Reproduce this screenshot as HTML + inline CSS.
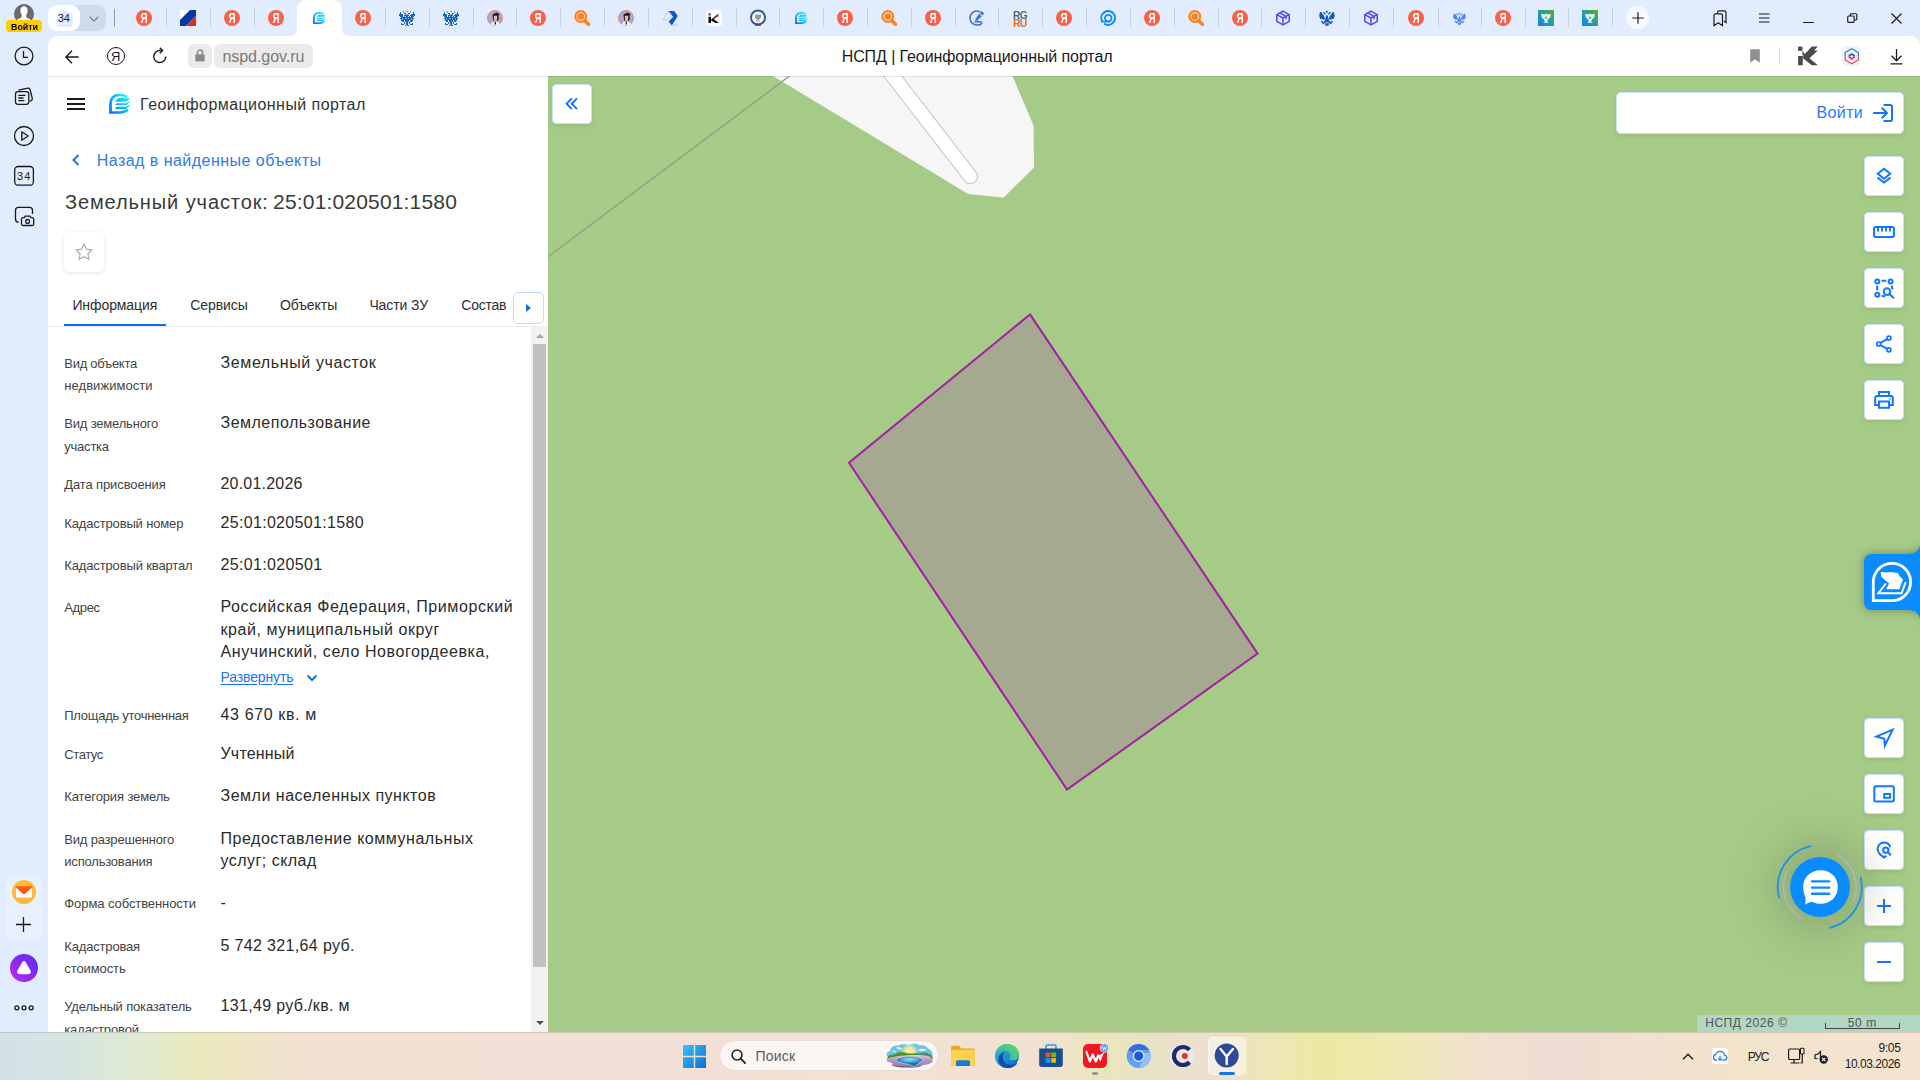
<!DOCTYPE html>
<html lang="ru">
<head>
<meta charset="utf-8">
<title>НСПД | Геоинформационный портал</title>
<style>
*{box-sizing:border-box;margin:0;padding:0}
html,body{width:1920px;height:1080px;overflow:hidden;background:#e1edff;font-family:"Liberation Sans",sans-serif;color:#333}
.a{position:absolute}
.t{position:absolute;white-space:pre;line-height:1}
svg{position:absolute;overflow:visible}
#chrome{left:0;top:0;width:1920px;height:76px;background:#e1edff}
#side{left:0;top:0;width:48px;height:1032px;background:#e1edff}
#addr{left:48px;top:36px;width:1872px;height:40px;background:#fff;border-radius:9px 9px 0 0}
#addrline{left:48px;top:76px;width:1872px;height:1px;background:rgba(0,0,0,.1)}
#panel{left:48px;top:76px;width:500px;height:956px;background:#fff;overflow:hidden}
#map{left:548px;top:76px;width:1372px;height:956px;background:#a6cb87;overflow:hidden}
#task{left:0;top:1032px;width:1920px;height:48px;background:linear-gradient(90deg,#d3e1e7 0px,#d6e4e2 70px,#deead4 130px,#ebe9bc 200px,#efe4c8 255px,#f2e0d4 330px,#f2dfd6 680px,#f2e2d3 900px,#f0e1d2 1040px,#ece6bd 1095px,#e8e2c6 1150px,#ecdfd0 1205px,#ede7b4 1275px,#ebeaa2 1330px,#eee8b4 1400px,#f1e0d0 1490px,#f1ddd4 1560px,#f2e3cb 1740px,#f6e3d2 1920px)}
.sep{position:absolute;top:8px;width:1px;height:19px;background:#c3cfdf}
.mb{position:absolute;width:40px;height:40px;background:#fff;border:1px solid #c6dfff;border-radius:4.500px;box-shadow:0 2px 5px rgba(0,0,0,.09)}
.lb{color:#444;font-size:13px}
.vl{color:#2b2b2b;font-size:16px}
</style>
</head>
<body>
<div id="chrome" class="a"></div>
<div id="side" class="a"></div>
<div id="addr" class="a"></div>
<svg width="70" height="36" viewBox="285 0 70 36" style="left:285px;top:0"><path d="M289,36C294.5,36 297,33.5 297,28V9C297,3.5 300.5,0 306,0H333C338.500,0 342,3.500 342,9V28C342,33.5 344.500,36 350,36Z" fill="#fff"/></svg>
<svg width="24" height="24" viewBox="12 2 24 24" style="left:12px;top:2px"><circle cx="24" cy="14" r="10" fill="#6b6b6b"/><path d="M24,6.200C26.200,6.200 27.600,7.900 27.600,10.400C27.600,12.200 27,13.900 26.200,15C26.100,16.200 26.300,17.200 27.300,17.900C29.300,18.700 31,19.400 32,21H16C17,19.400 18.700,18.700 20.700,17.900C21.700,17.200 21.900,16.200 21.800,15C21,13.900 20.400,12.200 20.400,10.400C20.400,7.900 21.800,6.200 24,6.200Z" fill="#fff"/></svg>
<div class="a" style="left:6px;top:20px;width:36px;height:12px;background:#ffcc00;border-radius:4px"></div>
<div class="t" style="left:11.2px;top:22px;font-size:9.5px;color:#000;font-weight:700;transform-origin:0 0;transform:scaleX(.93);">Войти</div>
<div class="a" style="left:48px;top:5px;width:58px;height:26px;background:#cfdbed;border-radius:9px"></div>
<div class="a" style="left:48px;top:5px;width:32px;height:26px;background:#fff;border-radius:9px"></div>
<svg width="18" height="19" viewBox="55 8.500 18 19" style="left:55px;top:8.500px"><path d="M64.400,9.300L70.800,12.400C72,13 72.700,14 72.700,15.300V23C72.700,25.200 71.200,26.700 69,26.700H59.800C57.600,26.700 56.100,25.200 56.100,23V15.300C56.100,14 56.800,13 58,12.400Z" fill="#e1edff"/></svg>
<div class="t" style="left:57.8px;top:13px;font-size:11px;letter-spacing:-0.1px;color:#222;">34</div>
<svg width="10" height="6" viewBox="0 0 10 6" style="left:89.200px;top:15.800px"><path d="M0.700,0.700L5,5L9.300,0.700" fill="none" stroke="#7b8696" stroke-width="1.300"/></svg>
<div class="a" style="left:114px;top:9px;width:1px;height:18px;background:#8e9aac"></div>
<div class="sep" style="left:166px"></div><div class="sep" style="left:210px"></div><div class="sep" style="left:254px"></div><div class="sep" style="left:385px"></div><div class="sep" style="left:429px"></div><div class="sep" style="left:473px"></div><div class="sep" style="left:516px"></div><div class="sep" style="left:560px"></div><div class="sep" style="left:604px"></div><div class="sep" style="left:648px"></div><div class="sep" style="left:692px"></div><div class="sep" style="left:736px"></div><div class="sep" style="left:779px"></div><div class="sep" style="left:823px"></div><div class="sep" style="left:867px"></div><div class="sep" style="left:911px"></div><div class="sep" style="left:955px"></div><div class="sep" style="left:998px"></div><div class="sep" style="left:1042px"></div><div class="sep" style="left:1086px"></div><div class="sep" style="left:1130px"></div><div class="sep" style="left:1174px"></div><div class="sep" style="left:1218px"></div><div class="sep" style="left:1261px"></div><div class="sep" style="left:1305px"></div><div class="sep" style="left:1349px"></div><div class="sep" style="left:1393px"></div><div class="sep" style="left:1438px"></div><div class="sep" style="left:1481px"></div><div class="sep" style="left:1525px"></div><div class="sep" style="left:1568px"></div><div class="sep" style="left:1612px"></div>
<div class="a" style="left:136.0px;top:10px;width:16px;height:16px;border-radius:8px;background:#fc5f45"></div><div class="t" style="left:136.0px;top:11px;width:16px;text-align:center;font-size:14px;font-weight:700;color:#fff;transform:scaleX(.7)">Я</div>
<svg width="16" height="16" viewBox="0 0 16 16" style="left:179.8px;top:10px"><rect width="16" height="16" fill="#fff"/><path d="M10,0H16V5.800L5.800,16H0V10Z" fill="#0636a8"/><path d="M16,5.800V16H5.800Z" fill="#dc2b1d"/></svg>
<div class="a" style="left:223.6px;top:10px;width:16px;height:16px;border-radius:8px;background:#fc5f45"></div><div class="t" style="left:223.6px;top:11px;width:16px;text-align:center;font-size:14px;font-weight:700;color:#fff;transform:scaleX(.7)">Я</div>
<div class="a" style="left:267.5px;top:10px;width:16px;height:16px;border-radius:8px;background:#fc5f45"></div><div class="t" style="left:267.5px;top:11px;width:16px;text-align:center;font-size:14px;font-weight:700;color:#fff;transform:scaleX(.7)">Я</div>
<svg width="13" height="12" viewBox="109 93.500 22 20.500" style="left:313.3px;top:12.0px"><defs><linearGradient id="ng1" gradientUnits="userSpaceOnUse" x1="110" y1="113" x2="130" y2="96"><stop offset="0" stop-color="#0a6cff"/><stop offset=".55" stop-color="#05c0ff"/><stop offset="1" stop-color="#45ffd0"/></linearGradient></defs><path d="M126,96.400C123.500,94.800 121,95 118.600,95C113.600,95 110.500,99 110.500,104V112.500H120.500C123,112.500 124.600,111.600 127,110.400" fill="none" stroke="url(#ng1)" stroke-width="3" stroke-linecap="round"/><path d="M118.300,98H130.200L126.700,101.800H115ZM116.700,103.200H126.200L129.500,101L129.900,102L126.600,105.100H115ZM116.500,106.800H126.200L129.500,104.600L129.900,105.600L126.300,108.900H115Z" fill="url(#ng1)"/></svg>
<div class="a" style="left:355.1px;top:10px;width:16px;height:16px;border-radius:8px;background:#fc5f45"></div><div class="t" style="left:355.1px;top:11px;width:16px;text-align:center;font-size:14px;font-weight:700;color:#fff;transform:scaleX(.7)">Я</div>
<svg width="16" height="15" viewBox="0 0 16 15" style="left:398.9px;top:11px;filter:blur(.35px)"><g fill="#1767bd"><rect x="4" y="0" width="1" height="1" opacity=".55"/><rect x="7" y="0" width="2" height="1" opacity=".55"/><rect x="11" y="0" width="1" height="1" opacity=".55"/><rect x="1" y="1" width="1" height="1"/><rect x="4" y="1" width="1" height="1" opacity=".55"/><rect x="11" y="1" width="1" height="1" opacity=".55"/><rect x="14" y="1" width="1" height="1"/><rect x="1" y="2" width="1" height="1"/><rect x="5" y="2" width="2" height="1"/><rect x="9" y="2" width="2" height="1"/><rect x="14" y="2" width="1" height="1"/><rect x="0" y="3" width="4" height="1"/><rect x="6" y="3" width="4" height="1" opacity=".55"/><rect x="12" y="3" width="4" height="1"/><rect x="0" y="4" width="4" height="1"/><rect x="5" y="4" width="5" height="1"/><rect x="11" y="4" width="5" height="1"/><rect x="1" y="5" width="3" height="1"/><rect x="5" y="5" width="1" height="1"/><rect x="7" y="5" width="2" height="1"/><rect x="10" y="5" width="1" height="1"/><rect x="12" y="5" width="3" height="1"/><rect x="2" y="6" width="12" height="1"/><rect x="1" y="7" width="2" height="1"/><rect x="3" y="7" width="1" height="1" opacity=".55"/><rect x="4" y="7" width="2" height="1"/><rect x="6" y="7" width="2" height="1" opacity=".55"/><rect x="8" y="7" width="1" height="1"/><rect x="9" y="7" width="1" height="1" opacity=".55"/><rect x="10" y="7" width="2" height="1"/><rect x="12" y="7" width="1" height="1" opacity=".55"/><rect x="13" y="7" width="2" height="1"/><rect x="2" y="8" width="1" height="1"/><rect x="3" y="8" width="1" height="1" opacity=".55"/><rect x="4" y="8" width="8" height="1"/><rect x="12" y="8" width="1" height="1" opacity=".55"/><rect x="13" y="8" width="1" height="1"/><rect x="2" y="9" width="3" height="1"/><rect x="6" y="9" width="4" height="1"/><rect x="11" y="9" width="3" height="1"/><rect x="3" y="10" width="2" height="1"/><rect x="6" y="10" width="4" height="1"/><rect x="11" y="10" width="2" height="1"/><rect x="5" y="11" width="1" height="1"/><rect x="7" y="11" width="2" height="1"/><rect x="10" y="11" width="1" height="1"/><rect x="2" y="12" width="1" height="1"/><rect x="5" y="12" width="1" height="1"/><rect x="7" y="12" width="2" height="1"/><rect x="10" y="12" width="1" height="1"/><rect x="13" y="12" width="1" height="1"/><rect x="2" y="13" width="3" height="1"/><rect x="7" y="13" width="2" height="1"/><rect x="11" y="13" width="3" height="1"/><rect x="6" y="14" width="1" height="1"/><rect x="8" y="14" width="2" height="1"/></g></svg>
<svg width="16" height="15" viewBox="0 0 16 15" style="left:442.7px;top:11px;filter:blur(.35px)"><g fill="#1767bd"><rect x="4" y="0" width="1" height="1" opacity=".55"/><rect x="7" y="0" width="2" height="1" opacity=".55"/><rect x="11" y="0" width="1" height="1" opacity=".55"/><rect x="1" y="1" width="1" height="1"/><rect x="4" y="1" width="1" height="1" opacity=".55"/><rect x="11" y="1" width="1" height="1" opacity=".55"/><rect x="14" y="1" width="1" height="1"/><rect x="1" y="2" width="1" height="1"/><rect x="5" y="2" width="2" height="1"/><rect x="9" y="2" width="2" height="1"/><rect x="14" y="2" width="1" height="1"/><rect x="0" y="3" width="4" height="1"/><rect x="6" y="3" width="4" height="1" opacity=".55"/><rect x="12" y="3" width="4" height="1"/><rect x="0" y="4" width="4" height="1"/><rect x="5" y="4" width="5" height="1"/><rect x="11" y="4" width="5" height="1"/><rect x="1" y="5" width="3" height="1"/><rect x="5" y="5" width="1" height="1"/><rect x="7" y="5" width="2" height="1"/><rect x="10" y="5" width="1" height="1"/><rect x="12" y="5" width="3" height="1"/><rect x="2" y="6" width="12" height="1"/><rect x="1" y="7" width="2" height="1"/><rect x="3" y="7" width="1" height="1" opacity=".55"/><rect x="4" y="7" width="2" height="1"/><rect x="6" y="7" width="2" height="1" opacity=".55"/><rect x="8" y="7" width="1" height="1"/><rect x="9" y="7" width="1" height="1" opacity=".55"/><rect x="10" y="7" width="2" height="1"/><rect x="12" y="7" width="1" height="1" opacity=".55"/><rect x="13" y="7" width="2" height="1"/><rect x="2" y="8" width="1" height="1"/><rect x="3" y="8" width="1" height="1" opacity=".55"/><rect x="4" y="8" width="8" height="1"/><rect x="12" y="8" width="1" height="1" opacity=".55"/><rect x="13" y="8" width="1" height="1"/><rect x="2" y="9" width="3" height="1"/><rect x="6" y="9" width="4" height="1"/><rect x="11" y="9" width="3" height="1"/><rect x="3" y="10" width="2" height="1"/><rect x="6" y="10" width="4" height="1"/><rect x="11" y="10" width="2" height="1"/><rect x="5" y="11" width="1" height="1"/><rect x="7" y="11" width="2" height="1"/><rect x="10" y="11" width="1" height="1"/><rect x="2" y="12" width="1" height="1"/><rect x="5" y="12" width="1" height="1"/><rect x="7" y="12" width="2" height="1"/><rect x="10" y="12" width="1" height="1"/><rect x="13" y="12" width="1" height="1"/><rect x="2" y="13" width="3" height="1"/><rect x="7" y="13" width="2" height="1"/><rect x="11" y="13" width="3" height="1"/><rect x="6" y="14" width="1" height="1"/><rect x="8" y="14" width="2" height="1"/></g></svg>
<svg width="16" height="16" viewBox="0 0 16 16" style="left:486.5px;top:10px"><circle cx="8" cy="8" r="7.500" fill="#aca6dc" stroke="#f08a4b" stroke-width="1"/><path d="M5.500,4.500L9.500,2.500L12.500,4L11.500,5.500L11.800,9L10.500,11H6.500L5.800,7.500Z" fill="#1c1a22"/><path d="M6.800,5.800H10.200L10,10.200L8.500,11.500L7,10.200Z" fill="#d8c3a0"/><path d="M3.800,14.200C4.500,12.300 6,11.600 8.300,11.600C10.600,11.600 12,12.300 12.700,14.200C11.500,15.200 10,15.500 8.300,15.500C6.500,15.500 5,15.200 3.800,14.200Z" fill="#f4f4f4"/><path d="M7.700,11.800H9V14.500H7.700Z" fill="#222"/></svg>
<div class="a" style="left:530.4px;top:10px;width:16px;height:16px;border-radius:8px;background:#fc5f45"></div><div class="t" style="left:530.4px;top:11px;width:16px;text-align:center;font-size:14px;font-weight:700;color:#fff;transform:scaleX(.7)">Я</div>
<svg width="16" height="16" viewBox="0 0 16 16" style="left:574.2px;top:10px"><circle cx="6.800" cy="6.500" r="5.400" fill="none" stroke="#ff7f1a" stroke-width="2.200"/><circle cx="6.800" cy="6.500" r="3.300" fill="#ff7f1a"/><path d="M11,11L14.500,14.300" stroke="#ff7f1a" stroke-width="3.400" stroke-linecap="round"/></svg>
<svg width="16" height="16" viewBox="0 0 16 16" style="left:618.0px;top:10px"><circle cx="8" cy="8" r="7.500" fill="#aca6dc" stroke="#f08a4b" stroke-width="1"/><path d="M5.500,4.500L9.500,2.500L12.500,4L11.500,5.500L11.800,9L10.500,11H6.500L5.800,7.500Z" fill="#1c1a22"/><path d="M6.800,5.800H10.200L10,10.200L8.500,11.500L7,10.200Z" fill="#d8c3a0"/><path d="M3.800,14.200C4.500,12.300 6,11.600 8.300,11.600C10.600,11.600 12,12.300 12.700,14.200C11.500,15.200 10,15.500 8.300,15.500C6.500,15.500 5,15.200 3.800,14.200Z" fill="#f4f4f4"/><path d="M7.700,11.800H9V14.500H7.700Z" fill="#222"/></svg>
<svg width="16" height="16" viewBox="0 0 16 16" style="left:661.8px;top:10px"><path d="M0.800,9.800L6.600,1.200L8.600,6.200L4.200,9.800Z" fill="#eaf1fd" stroke="#9dbcf0" stroke-width="0.700"/><path d="M6.600,1H12.200L15.800,6L9.800,15.400L6.600,11.600L11.200,6.800Z" fill="#0d57cf"/><path d="M9.800,15.200H15.600" stroke="#9dbcf0" stroke-width="0.700"/></svg>
<svg width="16" height="16" viewBox="0 0 16 16" style="left:705.6px;top:10px"><rect width="16" height="16" rx="3.500" fill="#fff"/><rect x="2.500" y="3.300" width="2.300" height="2.200" rx="0.600" fill="#1746b0"/><rect x="2.500" y="6.700" width="2.500" height="6.300" fill="#0a0a0a"/><path d="M5,9.800L12.800,3.200L11.500,5.800L7.800,9.300L13,13H9.700L5,10.600Z" fill="#0a0a0a"/><path d="M9.500,6.800L13.300,4.800L12,6.700L9.300,7.600Z" fill="#e52a1c"/></svg>
<svg width="16" height="17" viewBox="0 0 16 17" style="left:749.5px;top:10px"><circle cx="8" cy="7.500" r="7" fill="#fff" stroke="#2560a4" stroke-width="2"/><path d="M5,4.500H11V8L8,10.500L5,8Z" fill="#8f9bab"/><path d="M6,9.500L8,11.500L10,9.500L9.500,12H6.500Z" fill="#d9a54e"/><path d="M5,14.200H11V15.200L9.500,16H6.500L5,15.200Z" fill="#c22a3a"/><path d="M5,13.600H11V14.600H5Z" fill="#1d49b6"/></svg>
<svg width="13" height="12" viewBox="109 93.500 22 20.500" style="left:795.3px;top:12.0px"><defs><linearGradient id="ng2" gradientUnits="userSpaceOnUse" x1="110" y1="113" x2="130" y2="96"><stop offset="0" stop-color="#0a6cff"/><stop offset=".55" stop-color="#05c0ff"/><stop offset="1" stop-color="#45ffd0"/></linearGradient></defs><path d="M126,96.400C123.500,94.800 121,95 118.600,95C113.600,95 110.500,99 110.500,104V112.500H120.500C123,112.500 124.600,111.600 127,110.400" fill="none" stroke="url(#ng2)" stroke-width="3" stroke-linecap="round"/><path d="M118.300,98H130.200L126.700,101.800H115ZM116.700,103.200H126.200L129.500,101L129.900,102L126.600,105.100H115ZM116.500,106.800H126.200L129.500,104.600L129.900,105.600L126.300,108.900H115Z" fill="url(#ng2)"/></svg>
<div class="a" style="left:837.1px;top:10px;width:16px;height:16px;border-radius:8px;background:#fc5f45"></div><div class="t" style="left:837.1px;top:11px;width:16px;text-align:center;font-size:14px;font-weight:700;color:#fff;transform:scaleX(.7)">Я</div>
<svg width="16" height="16" viewBox="0 0 16 16" style="left:880.9px;top:10px"><circle cx="6.800" cy="6.500" r="5.400" fill="none" stroke="#ff7f1a" stroke-width="2.200"/><circle cx="6.800" cy="6.500" r="3.300" fill="#ff7f1a"/><path d="M11,11L14.500,14.300" stroke="#ff7f1a" stroke-width="3.400" stroke-linecap="round"/></svg>
<div class="a" style="left:924.7px;top:10px;width:16px;height:16px;border-radius:8px;background:#fc5f45"></div><div class="t" style="left:924.7px;top:11px;width:16px;text-align:center;font-size:14px;font-weight:700;color:#fff;transform:scaleX(.7)">Я</div>
<svg width="16" height="16" viewBox="0 0 16 16" style="left:968.5px;top:10px"><path d="M10.500,1.600C5.500,-0.200 1,3.200 1,8C1,12 4,15 7.800,15C10.500,15 12.500,14 12.800,13C13,12 11.500,11.600 9,11.600L6,11.900" fill="none" stroke="#3f6fc6" stroke-width="1.500" stroke-linecap="round"/><path d="M12.300,1L15.200,3.400L13.500,5.500L10.600,3.100ZM10,3.800L12.900,6.200L8.500,10.300L6.300,11L6.800,8.500Z" fill="#3f6fc6"/></svg>
<div class="t" style="left:1012.9px;top:9.500px;font-size:10.500px;font-weight:700;color:#4f6577;letter-spacing:-0.800px;transform-origin:0 0;transform:scaleX(.98)">RG</div><div class="t" style="left:1012.9px;top:17.600px;font-size:10.500px;font-weight:700;color:#f26a1b;letter-spacing:-0.800px;transform-origin:0 0;transform:scaleX(.98)">RU</div>
<div class="a" style="left:1056.2px;top:10px;width:16px;height:16px;border-radius:8px;background:#fc5f45"></div><div class="t" style="left:1056.2px;top:11px;width:16px;text-align:center;font-size:14px;font-weight:700;color:#fff;transform:scaleX(.7)">Я</div>
<svg width="16" height="16" viewBox="0 0 16 16" style="left:1100.0px;top:10px"><path d="M2.200,11.800C0.500,8.500 1.200,4.500 4.300,2.300C7.500,0.200 11.800,0.900 14,4C16,7 15.300,11.200 12.200,13.500C9.800,15.200 6.500,15.200 4,13.500" fill="none" stroke="#0c8cf2" stroke-width="2"/><circle cx="8.300" cy="8.200" r="3.300" fill="none" stroke="#0c8cf2" stroke-width="1.800"/><path d="M1,11.500H8.300" stroke="#0c8cf2" stroke-width="1.800"/></svg>
<div class="a" style="left:1143.8px;top:10px;width:16px;height:16px;border-radius:8px;background:#fc5f45"></div><div class="t" style="left:1143.8px;top:11px;width:16px;text-align:center;font-size:14px;font-weight:700;color:#fff;transform:scaleX(.7)">Я</div>
<svg width="16" height="16" viewBox="0 0 16 16" style="left:1187.6px;top:10px"><circle cx="6.800" cy="6.500" r="5.400" fill="none" stroke="#ff7f1a" stroke-width="2.200"/><circle cx="6.800" cy="6.500" r="3.300" fill="#ff7f1a"/><path d="M11,11L14.500,14.300" stroke="#ff7f1a" stroke-width="3.400" stroke-linecap="round"/></svg>
<div class="a" style="left:1231.5px;top:10px;width:16px;height:16px;border-radius:8px;background:#fc5f45"></div><div class="t" style="left:1231.5px;top:11px;width:16px;text-align:center;font-size:14px;font-weight:700;color:#fff;transform:scaleX(.7)">Я</div>
<svg width="16" height="16" viewBox="0 0 16 16" style="left:1275.3px;top:10px"><path d="M8,1.200L14.200,4.600V11.400L8,14.800L1.800,11.400V4.600Z" fill="none" stroke="#4a48f2" stroke-width="1.500" stroke-linejoin="round"/><path d="M1.800,4.600L8,8L14.200,4.600M8,8V14.800M4.900,2.900L11.100,6.300V9" fill="none" stroke="#4a48f2" stroke-width="1.500" stroke-linejoin="round"/></svg>
<svg width="16" height="16" viewBox="0 0 16 16" style="left:1319.1px;top:10px"><g fill="#175bb4"><circle cx="7.900" cy="1.700" r="1.050"/><path d="M1.200,1.700L2.600,2.500L5.200,6.300L5.800,8.200L6.900,8.400V5.400H9V8.400L10.100,8.200L10.700,6.300L13.300,2.500L14.700,1.700L15.100,3.200L15.700,4.500L15.500,6.700L14.700,8.700L12.100,9.600L9.300,9.300L10.900,11.200L9.900,12H6L5,11.200L6.600,9.300L3.800,9.600L1.200,8.700L0.400,6.700L0.200,4.500L0.800,3.200Z"/><path d="M3.700,2.300L5,1.900L6.900,3.600L6.500,4.600L5.300,4.300Z"/><path d="M12.200,2.300L10.900,1.900L9,3.600L9.400,4.600L10.600,4.300Z"/><path d="M6,12.200H9.900L9.700,15.500L7.950,15.900L6.200,15.500Z"/></g><g fill="none" stroke="#175bb4" stroke-width="1.500" stroke-linecap="round"><path d="M2.800,11.500L4.400,13.300L5.500,12"/><path d="M13.100,11.500L11.500,13.300L10.400,12"/></g><path d="M6.400,12.900H9.500" stroke="#e1edff" stroke-width=".7"/></svg>
<svg width="16" height="16" viewBox="0 0 16 16" style="left:1362.9px;top:10px"><path d="M8,1.200L14.200,4.600V11.400L8,14.800L1.800,11.400V4.600Z" fill="none" stroke="#4a48f2" stroke-width="1.500" stroke-linejoin="round"/><path d="M1.800,4.600L8,8L14.200,4.600M8,8V14.800M4.900,2.900L11.100,6.300V9" fill="none" stroke="#4a48f2" stroke-width="1.500" stroke-linejoin="round"/></svg>
<div class="a" style="left:1407.7px;top:10px;width:16px;height:16px;border-radius:8px;background:#fc5f45"></div><div class="t" style="left:1407.7px;top:11px;width:16px;text-align:center;font-size:14px;font-weight:700;color:#fff;transform:scaleX(.7)">Я</div>
<svg width="13" height="13" viewBox="0 0 16 16" style="left:1453.0px;top:11.5px"><g fill="#4b83f0"><circle cx="7.900" cy="1.700" r="1.050"/><path d="M1.200,1.700L2.600,2.500L5.200,6.300L5.800,8.200L6.900,8.400V5.400H9V8.400L10.100,8.200L10.700,6.300L13.300,2.500L14.700,1.700L15.100,3.200L15.700,4.500L15.500,6.700L14.700,8.700L12.100,9.600L9.300,9.300L10.900,11.200L9.900,12H6L5,11.200L6.600,9.300L3.800,9.600L1.200,8.700L0.400,6.700L0.200,4.500L0.800,3.200Z"/><path d="M3.700,2.300L5,1.900L6.900,3.600L6.500,4.600L5.300,4.300Z"/><path d="M12.200,2.300L10.900,1.900L9,3.600L9.400,4.600L10.600,4.300Z"/><path d="M6,12.200H9.900L9.700,15.500L7.950,15.900L6.200,15.500Z"/></g><g fill="none" stroke="#4b83f0" stroke-width="1.500" stroke-linecap="round"><path d="M2.800,11.500L4.400,13.300L5.500,12"/><path d="M13.100,11.500L11.500,13.300L10.400,12"/></g><path d="M6.400,12.900H9.500" stroke="#e1edff" stroke-width=".7"/></svg>
<div class="a" style="left:1495.4px;top:10px;width:16px;height:16px;border-radius:8px;background:#fc5f45"></div><div class="t" style="left:1495.4px;top:11px;width:16px;text-align:center;font-size:14px;font-weight:700;color:#fff;transform:scaleX(.7)">Я</div>
<svg width="16" height="16" viewBox="0 0 16 16" style="left:1538.2px;top:10px"><defs><linearGradient id="gg3" x1="0" y1="1" x2="1" y2="0"><stop offset="0" stop-color="#0a84ff"/><stop offset=".45" stop-color="#1f9bb0"/><stop offset="1" stop-color="#62ad12"/></linearGradient></defs><rect width="16" height="16" fill="url(#gg3)"/><path d="M8,3.200L9,4.500L12.800,3.800L12.200,7.500L9.800,9.800L9.200,11.500L10.800,12.800H5.200L6.800,11.500L6.200,9.800L3.800,7.500L3.200,3.800L7,4.500Z" fill="#eaf6f4"/><circle cx="8" cy="7.800" r="1.300" fill="#5fb0d8"/></svg>
<svg width="16" height="16" viewBox="0 0 16 16" style="left:1582.0px;top:10px"><defs><linearGradient id="gg4" x1="0" y1="1" x2="1" y2="0"><stop offset="0" stop-color="#0a84ff"/><stop offset=".45" stop-color="#1f9bb0"/><stop offset="1" stop-color="#62ad12"/></linearGradient></defs><rect width="16" height="16" fill="url(#gg4)"/><path d="M8,3.200L9,4.500L12.800,3.800L12.200,7.500L9.800,9.800L9.200,11.500L10.800,12.800H5.200L6.800,11.500L6.200,9.800L3.800,7.500L3.200,3.800L7,4.500Z" fill="#eaf6f4"/><circle cx="8" cy="7.800" r="1.300" fill="#5fb0d8"/></svg>
<div class="a" style="left:1626px;top:6px;width:23px;height:23px;border-radius:12px;background:#f6f9ff"></div>
<svg width="12" height="12" viewBox="0 0 12 12" style="left:1631.500px;top:11.500px"><path d="M6,0.300V11.700M0.300,6H11.700" stroke="#1a1a1a" stroke-width="1.200"/></svg>
<svg width="14" height="17" viewBox="0 0 14 17" style="left:1713px;top:10px"><path d="M4.500,3.500V2.500C4.500,1.500 5.200,0.800 6.200,0.800H11.300C12.300,0.800 13,1.500 13,2.500V12.500L11,11" fill="none" stroke="#1a1a1a" stroke-width="1.200"/><path d="M1,5.500C1,4.500 1.700,3.800 2.700,3.800H7.800C8.800,3.800 9.500,4.500 9.500,5.500V15.800L5.250,12.800L1,15.800Z" fill="none" stroke="#1a1a1a" stroke-width="1.200" stroke-linejoin="round"/></svg>
<svg width="11" height="10" viewBox="0 0 11 10" style="left:1759px;top:12.500px"><path d="M0,1H10.500M0,5H10.500M0,9H10.500" stroke="#1a1a1a" stroke-width="1.150"/></svg>
<div class="a" style="left:1803px;top:21.500px;width:10.500px;height:1.200px;background:#1a1a1a"></div>
<svg width="11" height="10" viewBox="0 0 11 10" style="left:1846.500px;top:13px"><rect x="0.700" y="3" width="6.500" height="6.300" rx="1" fill="none" stroke="#1a1a1a" stroke-width="1.150"/><path d="M3.300,3V1.700C3.300,1.100 3.700,0.700 4.300,0.700H8.800C9.400,0.700 9.800,1.100 9.800,1.700V6C9.800,6.600 9.400,7 8.800,7H7.200" fill="none" stroke="#1a1a1a" stroke-width="1.150"/></svg>
<svg width="11" height="11" viewBox="0 0 11 11" style="left:1890.500px;top:12.500px"><path d="M0.500,0.500L10.500,10.500M10.500,0.500L0.500,10.500" stroke="#1a1a1a" stroke-width="1.150"/></svg>
<svg width="14" height="14" viewBox="0 0 14 14" style="left:65px;top:49.700px"><path d="M7,0.700L0.900,7L7,13.300M1,7H13.700" fill="none" stroke="#1a1a1a" stroke-width="1.350"/></svg>
<div class="a" style="left:106.500px;top:46.500px;width:18.500px;height:18.500px;border:1.400px solid #1a1a1a;border-radius:10px"></div>
<div class="t" style="left:106.500px;top:49.500px;width:18.500px;text-align:center;font-size:13px;color:#1a1a1a">Я</div>
<svg width="16" height="17" viewBox="0 0 16 17" style="left:152px;top:47px"><path d="M13.800,9.500A6,6 0 1 1 8,3.500H10" fill="none" stroke="#1a1a1a" stroke-width="1.400"/><path d="M7.800,0.800L10.600,3.500L7.800,6.200" fill="none" stroke="#1a1a1a" stroke-width="1.400"/></svg>
<div class="a" style="left:188px;top:44px;width:24px;height:24px;background:#ebebeb;border-radius:6px"></div>
<svg width="10" height="13" viewBox="0 0 10 13" style="left:195px;top:49px"><path d="M2.500,6V3.500A2.500,2.500 0 0 1 7.500,3.500V6" fill="none" stroke="#8a8a8a" stroke-width="1.500"/><rect x="0.300" y="5.300" width="9.400" height="7.200" rx="1.300" fill="#8a8a8a"/></svg>
<div class="a" style="left:214px;top:44px;width:99px;height:24px;background:#ebebeb;border-radius:6px"></div>
<div class="t" style="left:222.5px;top:49px;font-size:16px;letter-spacing:-0.06px;color:#7a7a7a;">nspd.gov.ru</div>
<div class="t" style="left:841.7px;top:49px;font-size:16px;letter-spacing:-0.09px;color:#1a1a1a;">НСПД | Геоинформационный портал</div>
<svg width="10" height="14" viewBox="0 0 10 14" style="left:1750px;top:48.800px"><path d="M0.200,1.300C0.200,0.600 0.600,0.200 1.300,0.200H8.700C9.400,0.200 9.800,0.600 9.800,1.300V13.700L5,10.200L0.200,13.700Z" fill="#909090"/></svg>
<div class="a" style="left:1779px;top:48px;width:1px;height:16px;background:#e3e3e3"></div>
<svg width="22" height="22" viewBox="1797 45 22 22" style="left:1797px;top:45px"><g fill="#4b4b4b"><rect x="1798.100" y="46.600" width="4.300" height="4.200"/><path d="M1802.400,50.800L1805.800,55.600H1802.400Z"/><rect x="1798.100" y="56" width="4.700" height="9.300"/><path d="M1803.200,55.800L1811.800,46.500H1817.800L1814.200,50.600H1817.800L1809.500,58.200L1817.800,65.300H1811.800L1803.200,58.500Z"/></g></svg>
<div class="a" style="left:1842px;top:46px;width:19px;height:19.500px;background:#f1f4fb;border-radius:5px"></div>
<svg width="16" height="17" viewBox="1844 47.500 16 17" style="left:1844px;top:47.500px"><path d="M1845.200,56V52L1851.750,48.300L1858.300,52V56" fill="none" stroke="#2b72d8" stroke-width="1.200" stroke-linejoin="round"/><path d="M1845.200,56V59.600L1851.750,63.300L1858.300,59.600V56" fill="none" stroke="#e8435a" stroke-width="1.200" stroke-linejoin="round"/><path d="M1848.400,55.900L1848.900,53.700L1850.300,54L1851.100,52.700H1852.400L1853.200,54L1854.600,53.700L1855.100,55.900Z" fill="#2456c4"/><path d="M1848.400,55.900L1848.900,58.100L1850.300,57.800L1851.100,59.200H1852.400L1853.200,57.800L1854.600,58.100L1855.100,55.900Z" fill="#e8304a"/><circle cx="1851.750" cy="55.900" r="1.200" fill="#fff"/></svg>
<svg width="13" height="16" viewBox="0 0 13 16" style="left:1890px;top:48.500px"><path d="M6.500,0V11.500M1.500,6.800L6.500,11.800L11.500,6.800M0.500,14.800H12.500" fill="none" stroke="#1a1a1a" stroke-width="1.250"/></svg>

<svg width="24" height="24" viewBox="12 44 24 24" style="left:12px;top:44px"><circle cx="24" cy="56" r="8.900" fill="none" stroke="#1a1a1a" stroke-width="1.300"/><path d="M23.500,51V57.300H28" fill="none" stroke="#1a1a1a" stroke-width="1.300"/></svg>
<svg width="24" height="24" viewBox="12 84 24 24" style="left:12px;top:84px"><path d="M18.500,90.200L28,88.200C29.100,88 29.900,88.500 30.100,89.600L32.300,98.500C32.500,99.600 32,100.300 31,100.700L29.700,101.100" fill="none" stroke="#1a1a1a" stroke-width="1.300"/><rect x="15.500" y="91.700" width="13.300" height="12.600" rx="2.500" fill="none" stroke="#1a1a1a" stroke-width="1.300"/><path d="M18.300,95.300H25.500M18.300,98H23.500M18.300,100.700H24.500" fill="none" stroke="#1a1a1a" stroke-width="1.300" stroke-width="1.100"/></svg>
<svg width="24" height="24" viewBox="12 124 24 24" style="left:12px;top:124px"><circle cx="24" cy="136" r="9.500" fill="none" stroke="#1a1a1a" stroke-width="1.300"/><path d="M21.700,131.800L28.200,136L21.700,140.200Z" fill="none" stroke="#1a1a1a" stroke-width="1.300" stroke-linejoin="round"/><path d="M22.300,133V139" stroke="#777" stroke-width="1"/></svg>
<svg width="24" height="24" viewBox="12 164 24 24" style="left:12px;top:164px"><rect x="14.700" y="166.500" width="18.700" height="18.700" rx="3.500" fill="none" stroke="#1a1a1a" stroke-width="1.300"/></svg>
<div class="t" style="left:17.1px;top:171px;font-size:11px;letter-spacing:1.0px;color:#1a1a1a;">34</div>
<svg width="26" height="26" viewBox="12 204 26 26" style="left:12px;top:204px"><path d="M18.600,222.200C16.800,222.200 15.500,221 15.500,219.200V210.500C15.500,208.700 16.800,207.400 18.600,207.400H29.400C31.200,207.400 32.500,208.700 32.500,210.500V214" fill="none" stroke="#1a1a1a" stroke-width="1.300"/><path d="M21.500,219.200C21.500,218.300 22.100,217.700 23,217.700H24.300L25.200,216.200H30L30.900,217.700H32.200C33.100,217.700 33.700,218.300 33.700,219.200V224C33.700,224.900 33.100,225.500 32.200,225.500H23C22.100,225.500 21.500,224.900 21.500,224Z" fill="none" stroke="#1a1a1a" stroke-width="1.300"/><circle cx="27.600" cy="221.400" r="1.900" fill="none" stroke="#1a1a1a" stroke-width="1.300"/></svg>
<div class="a" style="left:6px;top:874.500px;width:36px;height:67px;border-radius:10px;background:#e8f0fe"></div>
<svg width="24" height="24" viewBox="12 880 24 24" style="left:12px;top:880px"><circle cx="24" cy="892" r="12" fill="#ffb93c"/><path d="M17,887.500H31C31.600,887.500 32,887.900 32,888.500V896.500C32,897.100 31.600,897.500 31,897.500H17C16.400,897.500 16,897.100 16,896.500V888.500C16,887.900 16.400,887.500 17,887.500Z" fill="#fff"/><path d="M16.500,886.200H31.500C32.300,886.200 32.600,887 32,887.600L25.600,893.500C24.700,894.300 23.300,894.300 22.400,893.500L16,887.600C15.400,887 15.700,886.200 16.500,886.200Z" fill="#ff5a1a"/></svg>
<svg width="20" height="20" viewBox="14 915 20 20" style="left:14px;top:915px"><path d="M23.500,917V932M16,924.500H31" stroke="#1a1a1a" stroke-width="1.300"/></svg>
<svg width="32" height="32" viewBox="8 952 32 32" style="left:8px;top:952px"><defs><linearGradient id="al" x1="1" y1="0" x2="0" y2="1"><stop offset="0" stop-color="#5a2cf5"/><stop offset=".5" stop-color="#8a2af0"/><stop offset="1" stop-color="#c22af0"/></linearGradient></defs><circle cx="24" cy="968" r="14" fill="url(#al)"/><path d="M22.200,962.200C23,960.600 25,960.600 25.800,962.200L30.600,970.800C31.500,972.400 30.800,973.600 29,973.900C25.700,974.400 22.300,974.400 19,973.900C17.200,973.600 16.500,972.400 17.400,970.800Z" fill="#fff"/></svg>
<svg width="24" height="12" viewBox="12 1002 24 12" style="left:12px;top:1002px"><circle cx="16.800" cy="1007.800" r="2" fill="none" stroke="#1a1a1a" stroke-width="1.300" stroke-width="1.400"/><circle cx="24" cy="1007.800" r="2" fill="none" stroke="#1a1a1a" stroke-width="1.300" stroke-width="1.400"/><circle cx="31.200" cy="1007.800" r="2" fill="none" stroke="#1a1a1a" stroke-width="1.300" stroke-width="1.400"/></svg>

<div id="map" class="a">
<svg width="1372" height="956" viewBox="548 76 1372 956" style="left:0;top:0">
  <polygon points="773,76 1012.5,76 1033.5,125.5 1034,167.5 1003.7,197.5 968.2,194" fill="#f6f6f6"/>
  <line x1="789.5" y1="76" x2="548" y2="256.8" stroke="#8f9e86" stroke-width="1.3"/>
  <line x1="878" y1="57" x2="970.3" y2="176.5" stroke="#c6c6c6" stroke-width="15.4" stroke-linecap="round"/>
  <line x1="878" y1="57" x2="970.3" y2="176.5" stroke="#ffffff" stroke-width="13.4" stroke-linecap="round"/>
  <polygon points="1030,314.400 1257.600,653.600 1067,789.600 849,462.800" fill="#a5a98f" stroke="#a41ea6" stroke-width="2" stroke-linejoin="miter"/>
</svg>
</div>
<div id="panel" class="a"></div>
<div class="a" style="left:67px;top:98px;width:18px;height:2px;background:#1a1a1a"></div><div class="a" style="left:67px;top:103px;width:18px;height:2px;background:#1a1a1a"></div><div class="a" style="left:67px;top:108px;width:18px;height:2px;background:#1a1a1a"></div>
<svg width="24" height="24" viewBox="108 92 24 24" style="left:108px;top:92px">
<defs><linearGradient id="lg1" gradientUnits="userSpaceOnUse" x1="110" y1="113" x2="130" y2="96"><stop offset="0" stop-color="#0a6cff"/><stop offset=".55" stop-color="#05c0ff"/><stop offset="1" stop-color="#45ffd0"/></linearGradient></defs>
<path d="M126,96.4C123.5,94.8 121,95 118.6,95C113.6,95 110.5,99 110.5,104V112.5H120.5C123,112.5 124.6,111.6 127,110.4" fill="none" stroke="url(#lg1)" stroke-width="2.7" stroke-linecap="round" stroke-linejoin="miter"/>
<path d="M118.3,98H130.2L126.7,101.8H115ZM116.7,103.2H126.2L129.5,101L129.9,102L126.6,105.1H115ZM116.5,106.8H126.2L129.5,104.6L129.9,105.6L126.3,108.9H115Z" fill="url(#lg1)"/>
</svg>
<div class="t" style="left:140.1px;top:97px;font-size:16px;letter-spacing:0.44px;color:#333;">Геоинформационный портал</div>
<svg width="8" height="12" viewBox="0 0 8 12" style="left:72px;top:154px"><path d="M6.5 1L1.5 6L6.5 11" fill="none" stroke="#1a73f5" stroke-width="2"/></svg>
<div class="t" style="left:96.7px;top:153px;font-size:16px;letter-spacing:0.47px;color:#2a7cf6;">Назад в найденные объекты</div>
<div class="t" style="left:64.9px;top:192px;font-size:20px;letter-spacing:0.91px;color:#3a3a3a;">Земельный участок:</div>
<div class="t" style="left:273.1px;top:191px;font-size:21px;letter-spacing:0.17px;color:#3a3a3a;">25:01:020501:1580</div>
<div class="a" style="left:64px;top:232px;width:40px;height:40px;background:#fff;border-radius:5px;box-shadow:0 1px 4px rgba(0,0,0,.11)"></div>
<svg width="20" height="20" viewBox="0 0 24 24" style="left:74px;top:241.5px"><path d="M12 2.6l2.9 6.1 6.6.9-4.8 4.6 1.2 6.6L12 17.6l-5.9 3.2 1.2-6.6-4.8-4.6 6.6-.9z" fill="none" stroke="#b0b0b0" stroke-width="1.6" stroke-linejoin="miter"/></svg>
<div class="t" style="left:72.4px;top:298px;font-size:14px;letter-spacing:-0.09px;color:#2e2e2e;">Информация</div>
<div class="t" style="left:190.2px;top:298px;font-size:14px;letter-spacing:-0.08px;color:#2e2e2e;">Сервисы</div>
<div class="t" style="left:279.9px;top:298px;font-size:14px;letter-spacing:-0.07px;color:#2e2e2e;">Объекты</div>
<div class="t" style="left:369.4px;top:298px;font-size:14px;letter-spacing:-0.1px;color:#2e2e2e;">Части ЗУ</div>
<div class="t" style="left:461.3px;top:298px;font-size:14px;letter-spacing:-0.24px;color:#2e2e2e;">Состав</div>
<div class="a" style="left:48px;top:326px;width:500px;height:1px;background:#ececec"></div>
<div class="a" style="left:64px;top:324px;width:102px;height:2px;background:#0d6efd"></div>
<div class="a" style="left:512.500px;top:292px;width:31.500px;height:32px;background:#fff;border:1px solid #c0dbff;border-radius:5px"></div>
<svg width="6" height="8" viewBox="0 0 6 8" style="left:526px;top:304px"><path d="M0 0L5 4L0 8Z" fill="#0d6efd"/></svg>
<div class="a" style="left:531px;top:327px;width:17px;height:705px;background:#f1f1f1"></div>
<div class="a" style="left:533px;top:344px;width:13px;height:623px;background:#c1c1c1"></div>
<svg width="8" height="4" viewBox="0 0 8 4" style="left:535.500px;top:334px"><path d="M0 4L4 0L8 4Z" fill="#a3a3a3"/></svg>
<svg width="8" height="4" viewBox="0 0 8 4" style="left:535.500px;top:1021px"><path d="M0 0L4 4L8 0Z" fill="#505050"/></svg>
<div class="a" style="left:48px;top:328px;width:483px;height:704px;overflow:hidden"><div class="a" style="left:-48px;top:-328px">
<div class="t lb" style="left:64.3px;top:357px;font-size:13px;letter-spacing:-0.27px;">Вид объекта</div>
<div class="t lb" style="left:64.3px;top:379px;font-size:13px;letter-spacing:0.05px;">недвижимости</div>
<div class="t lb" style="left:64.3px;top:417px;font-size:13px;letter-spacing:-0.19px;">Вид земельного</div>
<div class="t lb" style="left:64.3px;top:440px;font-size:13px;letter-spacing:-0.23px;">участка</div>
<div class="t lb" style="left:64.3px;top:478px;font-size:13px;letter-spacing:-0.12px;">Дата присвоения</div>
<div class="t lb" style="left:64.3px;top:517px;font-size:13px;letter-spacing:-0.15px;">Кадастровый номер</div>
<div class="t lb" style="left:64.3px;top:559px;font-size:13px;letter-spacing:-0.14px;">Кадастровый квартал</div>
<div class="t lb" style="left:64.3px;top:601px;font-size:13px;letter-spacing:-0.38px;">Адрес</div>
<div class="t lb" style="left:64.3px;top:709px;font-size:13px;letter-spacing:-0.28px;">Площадь уточненная</div>
<div class="t lb" style="left:64.3px;top:748px;font-size:13px;letter-spacing:-0.42px;">Статус</div>
<div class="t lb" style="left:64.3px;top:790px;font-size:13px;letter-spacing:-0.13px;">Категория земель</div>
<div class="t lb" style="left:64.3px;top:833px;font-size:13px;letter-spacing:-0.19px;">Вид разрешенного</div>
<div class="t lb" style="left:64.3px;top:855px;font-size:13px;letter-spacing:-0.2px;">использования</div>
<div class="t lb" style="left:64.3px;top:897px;font-size:13px;letter-spacing:-0.08px;">Форма собственности</div>
<div class="t lb" style="left:64.3px;top:940px;font-size:13px;letter-spacing:-0.17px;">Кадастровая</div>
<div class="t lb" style="left:64.3px;top:962px;font-size:13px;letter-spacing:-0.1px;">стоимость</div>
<div class="t lb" style="left:64.3px;top:1000px;font-size:13px;letter-spacing:-0.17px;">Удельный показатель</div>
<div class="t lb" style="left:64.3px;top:1023px;font-size:13px;letter-spacing:-0.15px;">кадастровой</div>
<div class="t vl" style="left:220.5px;top:355px;font-size:16px;letter-spacing:0.61px;">Земельный участок</div>
<div class="t vl" style="left:220.5px;top:415px;font-size:16px;letter-spacing:0.49px;">Землепользование</div>
<div class="t vl" style="left:220.5px;top:476px;font-size:16px;letter-spacing:0.21px;">20.01.2026</div>
<div class="t vl" style="left:220.5px;top:515px;font-size:16px;letter-spacing:0.32px;">25:01:020501:1580</div>
<div class="t vl" style="left:220.5px;top:557px;font-size:16px;letter-spacing:0.34px;">25:01:020501</div>
<div class="t vl" style="left:220.5px;top:599px;font-size:16px;letter-spacing:0.6px;">Российская Федерация, Приморский</div>
<div class="t vl" style="left:220.5px;top:622px;font-size:16px;letter-spacing:0.57px;">край, муниципальный округ</div>
<div class="t vl" style="left:220.5px;top:644px;font-size:16px;letter-spacing:0.58px;">Анучинский, село Новогордеевка,</div>
<div class="t vl" style="left:220.5px;top:707px;font-size:16px;letter-spacing:0.63px;">43 670 кв. м</div>
<div class="t vl" style="left:220.5px;top:746px;font-size:16px;letter-spacing:0.19px;">Учтенный</div>
<div class="t vl" style="left:220.5px;top:788px;font-size:16px;letter-spacing:0.51px;">Земли населенных пунктов</div>
<div class="t vl" style="left:220.5px;top:831px;font-size:16px;letter-spacing:0.53px;">Предоставление коммунальных</div>
<div class="t vl" style="left:220.5px;top:853px;font-size:16px;letter-spacing:0.47px;">услуг; склад</div>
<div class="t vl" style="left:220.5px;top:895px;font-size:16px;">-</div>
<div class="t vl" style="left:220.5px;top:938px;font-size:16px;letter-spacing:0.35px;">5 742 321,64 руб.</div>
<div class="t vl" style="left:220.5px;top:998px;font-size:16px;letter-spacing:0.33px;">131,49 руб./кв. м</div>
<div class="t" style="left:220.5px;top:670px;font-size:14px;letter-spacing:-0.14px;color:#1a73f5;text-decoration:underline;text-underline-offset:2px;">Развернуть</div>
<svg width="12" height="8" viewBox="0 0 12 8" style="left:306px;top:674px"><path d="M1.5 1.5L6 6L10.5 1.5" fill="none" stroke="#1a73f5" stroke-width="2"/></svg>
</div></div>

<div class="mb" style="left:552px;top:84px;width:40px;height:40px"></div>
<svg width="40" height="40" viewBox="552 84 40 40" style="left:552px;top:84px"><path d="M571.800,98.400L566.600,103.750L571.800,109.100M577,98.400L571.800,103.750L577,109.100" fill="none" stroke="#1277ff" stroke-width="2" stroke-width="2.200"/></svg>
<div class="mb" style="left:1616px;top:92px;width:288px;height:42px;border-radius:5px"></div>
<div class="t" style="left:1816.5px;top:105px;font-size:16px;letter-spacing:0.38px;color:#1f7aff;">Войти</div>
<svg width="28" height="26" viewBox="1870 100 28 26" style="left:1870px;top:100px"><path d="M1873.200,113H1886.500M1881.800,107.700L1887,113L1881.800,118.300M1883.500,105H1890.200C1891.300,105 1892,105.700 1892,106.800V119.200C1892,120.300 1891.300,121 1890.200,121H1883.500" fill="none" stroke="#1277ff" stroke-width="2"/></svg>
<div class="mb" style="left:1864px;top:156px;width:40px;height:40px"></div>
<svg width="40" height="40" viewBox="1864 156 40 40" style="left:1864px;top:156px"><path d="M1884,168.800L1890.200,173.800L1884,178.800L1877.800,173.800Z" fill="none" stroke="#1277ff" stroke-width="2" stroke-linejoin="miter"/><path d="M1877.600,177.600L1884,182.600L1890.400,177.600" fill="none" stroke="#1277ff" stroke-width="2"/></svg>
<div class="mb" style="left:1864px;top:212px;width:40px;height:40px"></div>
<svg width="40" height="40" viewBox="1864 212 40 40" style="left:1864px;top:212px"><rect x="1874.100" y="227.100" width="19.800" height="9.800" rx="1.500" fill="none" stroke="#1277ff" stroke-width="2"/><path d="M1878,227V231.500M1882,227V231.500M1886,227V231.500M1890,227V231.500" fill="none" stroke="#1277ff" stroke-width="2"/></svg>
<div class="mb" style="left:1864px;top:268px;width:40px;height:40px"></div>
<svg width="40" height="40" viewBox="1864 268 40 40" style="left:1864px;top:268px"><circle cx="1877.300" cy="281.400" r="2" fill="none" stroke="#1277ff" stroke-width="2" stroke-width="1.700"/><circle cx="1890.600" cy="281.400" r="2" fill="none" stroke="#1277ff" stroke-width="2" stroke-width="1.700"/><circle cx="1877.300" cy="294.700" r="2" fill="none" stroke="#1277ff" stroke-width="2" stroke-width="1.700"/><path d="M1881.500,280.700H1886.300M1877.200,285.800V290.300M1891.600,285.400L1892.600,289.400M1881.500,295.800L1885.200,296.600" fill="none" stroke="#1277ff" stroke-width="2"/><circle cx="1887" cy="291.600" r="3.300" fill="none" stroke="#1277ff" stroke-width="2" stroke-width="1.700"/><path d="M1889.600,294.200L1894,298.200" fill="none" stroke="#1277ff" stroke-width="2" stroke-width="1.700"/></svg>
<div class="mb" style="left:1864px;top:324px;width:40px;height:40px"></div>
<svg width="40" height="40" viewBox="1864 324 40 40" style="left:1864px;top:324px"><path d="M1888.900,338.100L1878.700,344L1888.900,349.800" fill="none" stroke="#1277ff" stroke-width="2" stroke-width="1.700"/><circle cx="1888.900" cy="338.100" r="2" fill="#fff" stroke="#1277ff" stroke-width="1.700"/><circle cx="1878.700" cy="344" r="2" fill="#fff" stroke="#1277ff" stroke-width="1.700"/><circle cx="1888.900" cy="349.800" r="2" fill="#fff" stroke="#1277ff" stroke-width="1.700"/></svg>
<div class="mb" style="left:1864px;top:380px;width:40px;height:40px"></div>
<svg width="40" height="40" viewBox="1864 380 40 40" style="left:1864px;top:380px"><path d="M1879,396V392H1889V396" fill="none" stroke="#1277ff" stroke-width="2"/><path d="M1879,405H1875.200V398C1875.200,396.800 1876,396 1877.200,396H1890.800C1892,396 1892.800,396.800 1892.800,398V405H1889" fill="none" stroke="#1277ff" stroke-width="2"/><rect x="1879" y="401.500" width="10" height="6.300" fill="none" stroke="#1277ff" stroke-width="2"/><path d="M1889.300,398.800H1890.800" stroke="#1277ff" stroke-width="1.200"/></svg>
<svg width="64" height="84" viewBox="1856 540 64 84" style="left:1856px;top:540px;filter:drop-shadow(0 0 5px rgba(40,50,30,.45))"><path d="M1921,541C1920,549.500 1916,554 1908,554H1872C1867,554 1864,557 1864,562V602C1864,607 1867,610 1872,610H1908C1916,610 1920,614.500 1921,623Z" fill="#0a8cff"/></svg>
<svg width="64" height="84" viewBox="1856 540 64 84" style="left:1856px;top:540px"><path d="M1892,563.300C1902.300,563.300 1910.600,571.600 1910.600,582C1910.600,592.300 1902.300,600.600 1892,600.600H1873.300V582C1873.300,571.600 1881.700,563.300 1892,563.300Z" fill="none" stroke="#fff" stroke-width="2.800"/><path d="M1880.700,572.100L1888.100,572.600L1890.500,572.100L1897.900,573.100L1899.300,575.800L1903,579.500L1899.300,589.300H1886.300L1889.100,583.500L1881.200,576.800Z" fill="#fff"/><path d="M1885.800,583.500L1878.400,593.200H1901.600L1905.700,582" fill="none" stroke="#fff" stroke-width="1.900"/></svg>
<div class="mb" style="left:1864px;top:718px;width:40px;height:40px"></div>
<svg width="40" height="40" viewBox="1864 718 40 40" style="left:1864px;top:718px"><path d="M1892.600,729.700L1884.800,745.800L1884.300,738.700L1876.400,736.500Z" fill="none" stroke="#1277ff" stroke-width="2" stroke-linejoin="miter"/></svg>
<div class="mb" style="left:1864px;top:774px;width:40px;height:40px"></div>
<svg width="40" height="40" viewBox="1864 774 40 40" style="left:1864px;top:774px"><rect x="1874.300" y="786.300" width="19.500" height="15.200" rx="1.500" fill="none" stroke="#1277ff" stroke-width="2"/><rect x="1884.200" y="794" width="5.800" height="3.800" fill="none" stroke="#1277ff" stroke-width="2" stroke-width="1.600"/></svg>
<div class="mb" style="left:1864px;top:830px;width:40px;height:40px"></div>
<svg width="40" height="40" viewBox="1864 830 40 40" style="left:1864px;top:830px"><path d="M1890.300,847.200C1889.300,844.200 1887,842.500 1884.200,842.500C1880.400,842.500 1877.600,845.300 1877.600,849C1877.600,852.200 1880,855 1884.200,857.600L1886.300,855.700" fill="none" stroke="#1277ff" stroke-width="2" stroke-width="1.450" stroke-linejoin="round"/><circle cx="1885.800" cy="850.200" r="2.600" fill="none" stroke="#1277ff" stroke-width="2" stroke-width="1.400"/><path d="M1887.800,852.200L1891,855.200" fill="none" stroke="#1277ff" stroke-width="2" stroke-width="1.450"/></svg>
<div class="mb" style="left:1864px;top:886px;width:40px;height:40px"></div>
<svg width="40" height="40" viewBox="1864 886 40 40" style="left:1864px;top:886px"><path d="M1884,899V913M1877,906H1891" fill="none" stroke="#1277ff" stroke-width="2"/></svg>
<div class="mb" style="left:1864px;top:942px;width:40px;height:40px"></div>
<svg width="40" height="40" viewBox="1864 942 40 40" style="left:1864px;top:942px"><path d="M1877,962H1891" fill="none" stroke="#1277ff" stroke-width="2"/></svg>
<div class="a" style="left:1790px;top:857px;width:60px;height:60px;border-radius:30px;box-shadow:0 0 48px 14px rgba(70,80,60,.3)"></div>
<svg width="100" height="100" viewBox="1770 836 100 100" style="left:1770px;top:836px"><circle cx="1820" cy="887" r="30" fill="#0a8bff"/><path d="M1810.600,846.100A42,42 0 0 0 1779.100,897.600" fill="none" stroke="#1e90ee" stroke-width="1.800" stroke-linecap="round"/><path d="M1860.800,877.600A42,42 0 0 1 1830,927.800" fill="none" stroke="#1e90ee" stroke-width="1.800" stroke-linecap="round"/><path d="M1837.500,855.200A36,36 0 0 1 1853,901.800" fill="none" stroke="#b4b4b4" stroke-width="1.800" stroke-linecap="round"/><path d="M1786.800,871.800A36,36 0 0 0 1802.200,918.500" fill="none" stroke="#b4b4b4" stroke-width="1.800" stroke-linecap="round"/><path d="M1820.800,870.200C1830.500,870.200 1837.800,877 1837.800,887C1837.800,897 1830.500,903.800 1820.800,903.800C1817.300,903.800 1814.600,903.200 1812.200,901.800C1809.800,902 1807.600,903 1805,904.800C1805.800,902 1805.600,899.500 1805.400,897C1804,894 1803.200,890.800 1803.200,887C1803.200,877 1810.800,870.200 1820.800,870.200Z" fill="#fff"/><path d="M1812,881.400H1829.200M1812,887.600H1829.200M1812,893.800H1829.200" stroke="#0a8bff" stroke-width="2.400" stroke-linecap="round"/></svg>
<div class="a" style="left:1697px;top:1015px;width:223px;height:17px;background:#b1d6c1"></div>
<div class="t" style="left:1705.2px;top:1017px;font-size:12px;letter-spacing:0.55px;color:#555;">НСПД 2026 ©</div>
<div class="t" style="left:1847.7px;top:1017px;font-size:12px;letter-spacing:0.6px;color:#555;">50 m</div>
<div class="a" style="left:1825px;top:1022.500px;width:75px;height:6px;border:1px solid #444;border-top:0"></div>

<div id="task" class="a"></div>
<div class="a" style="left:0;top:1032px;width:1920px;height:1px;background:rgba(120,120,120,.25)"></div>
<svg width="26" height="26" viewBox="682 1044 26 26" style="left:682px;top:1044px"><defs><linearGradient id="wl" x1="0" y1="0" x2="1" y2="1"><stop offset="0" stop-color="#35c3f7"/><stop offset="1" stop-color="#0a6fd8"/></linearGradient></defs><path d="M683,1045H693.800V1055.800H683ZM695.200,1045H706V1055.800H695.200ZM683,1057.200H693.800V1068H683ZM695.200,1057.200H706V1068H695.200Z" fill="url(#wl)"/></svg>
<div class="a" style="left:719px;top:1040.200px;width:219.700px;height:31.300px;border-radius:15.650px;background:#faf6f3;border:1px solid #e6dcd4"></div>
<svg width="20" height="20" viewBox="728 1046 20 20" style="left:728px;top:1046px"><circle cx="737" cy="1055" r="5" fill="none" stroke="#222" stroke-width="1.600"/><path d="M740.700,1058.700L745,1063" stroke="#222" stroke-width="1.800" stroke-linecap="round"/></svg>
<div class="t" style="left:755.5px;top:1049px;font-size:14px;letter-spacing:0.2px;color:#5a5a5a;">Поиск</div>
<svg width="52" height="28" viewBox="884 1042 52 28" style="left:884px;top:1042px"><defs><radialGradient id="sun1" gradientUnits="userSpaceOnUse" cx="909.500" cy="1052" r="9"><stop offset="0" stop-color="#fff0a0"/><stop offset=".45" stop-color="#fde98e"/><stop offset=".75" stop-color="#9fdcc8"/><stop offset="1" stop-color="#6cc3e2"/></radialGradient><radialGradient id="lk1" gradientUnits="userSpaceOnUse" cx="910" cy="1059.500" r="13" gradientTransform="translate(0 741.650) scale(1 .3)"><stop offset="0" stop-color="#8fe9bf"/><stop offset=".6" stop-color="#58a9d6"/><stop offset="1" stop-color="#1673bd"/></radialGradient><linearGradient id="pg1" x1="0" y1="0" x2="0" y2="1"><stop offset="0" stop-color="#f3c4b8"/><stop offset=".35" stop-color="#b79ac8"/><stop offset=".8" stop-color="#9a84b4"/><stop offset="1" stop-color="#5e4f58"/></linearGradient></defs><path d="M887,1056C886,1053.500 887.500,1051.500 890,1051C890.500,1047.500 894,1045.200 898,1045.600C901,1043.800 906,1043.800 909,1045C912,1043.200 917,1043.400 919.500,1045.400C923,1044.800 927,1046.200 928.500,1049C931,1049.500 933,1052 932.500,1056Z" fill="url(#sun1)"/><path d="M896,1047.600C898,1046.400 901,1047.200 902.500,1048.800C901.500,1050 898,1050 896,1047.600ZM892,1051C893.500,1050.200 895.500,1050.800 896.500,1052C895,1052.400 893,1052.200 892,1051ZM918,1050.200C920,1048.200 924,1048.200 926.500,1049.800C926,1051.200 921,1051.600 918,1050.200Z" fill="#f4f1dc"/><path d="M887.200,1057.600C887.500,1055.800 890,1055 893,1054.800C896,1054.200 897,1052.400 900,1052.300C903,1052.100 905,1052.200 906.500,1053.200C912,1053.800 918,1053.600 922,1053.400C925,1052 928,1053 929.500,1054.500C931.500,1055 933,1056.500 932.800,1058.500L931,1060H888Z" fill="#4f8f27"/><path d="M913,1053.600C917,1053.400 922,1053.200 925,1052.200C927.500,1053 929,1054.200 929.500,1055.200C924,1055.200 918,1054.800 913,1053.600Z" fill="#4e8f7a"/><path d="M886.600,1059.500C889,1057.200 897,1056.400 904,1055.600C912,1054.800 922,1055 928,1056C931,1056.800 933,1059 932.800,1061.500C931,1064 926,1064.800 922,1065.200C921.500,1066.500 918,1067.600 912,1067.400C904,1068 895,1067.400 891.500,1065.200C893,1063.800 893,1063.600 891,1062.800C888,1062.200 886.400,1061 886.600,1059.500Z" fill="url(#pg1)"/><path d="M896.500,1059.500C899,1057.200 905,1056.200 910,1056.200C915,1056.200 920,1057.200 922.500,1059.200C923.500,1060.500 921,1061.500 919.500,1062.200C918,1064 916,1065.800 914.500,1066.800C912,1066.200 910,1065 908,1064.200C904,1063.800 900,1062.500 898,1061.500C896.500,1061 895.800,1060.200 896.500,1059.500Z" fill="url(#lk1)" stroke="#dff2ea" stroke-width=".5"/></svg>
<svg width="26" height="26" viewBox="950 1043 26 26" style="left:950px;top:1043px"><path d="M951,1047.500C951,1046.400 951.700,1045.700 952.800,1045.700H959L961.500,1048.500H973.200C974.300,1048.500 975,1049.200 975,1050.300V1064.200C975,1065.300 974.300,1066 973.200,1066H952.800C951.700,1066 951,1065.300 951,1064.200Z" fill="#e9a820"/><path d="M951,1051.500C951,1050.400 951.700,1049.700 952.800,1049.700H973.200C974.300,1049.700 975,1050.400 975,1051.500V1064.200C975,1065.300 974.300,1066 973.200,1066H952.800C951.700,1066 951,1065.300 951,1064.200Z" fill="#fbd150"/><path d="M956,1066V1062C956,1061 956.700,1060.300 957.700,1060.300H968.300C969.300,1060.300 970,1061 970,1062V1066Z" fill="#1a78d8"/></svg>
<svg width="26" height="26" viewBox="994 1043 26 26" style="left:994px;top:1043px"><defs><linearGradient id="eg1" x1="0" y1="0" x2="1" y2="1"><stop offset="0" stop-color="#2ec5d8"/><stop offset=".6" stop-color="#1c86d8"/><stop offset="1" stop-color="#0f58b8"/></linearGradient><linearGradient id="eg2" x1="0" y1="1" x2="1" y2="0"><stop offset="0" stop-color="#27b1e0"/><stop offset="1" stop-color="#62d84c"/></linearGradient></defs><circle cx="1007" cy="1056" r="12" fill="url(#eg1)"/><path d="M995.200,1054C996.500,1048 1001,1044 1007,1044C1013.500,1044 1019,1048.500 1019,1054.500C1019,1058.500 1016,1060.500 1012.500,1060.500C1010,1060.500 1008.800,1059.500 1009.500,1058C1010.500,1056.500 1010.800,1055 1010,1053.500C1008.800,1051.200 1006,1050 1003,1050.500C999.500,1051 996.500,1052 995.200,1054Z" fill="url(#eg2)"/><path d="M1003,1057.500C1003,1061.500 1006,1065 1011,1065C1014,1065 1016.500,1064 1018,1062.200C1016,1066 1012,1068 1007.500,1068C1002,1068 998,1063.500 998.500,1058C999,1054.500 1001.500,1052.500 1004.500,1052.500C1003.500,1054 1003,1055.500 1003,1057.500Z" fill="#0d4fa8"/></svg>
<svg width="26" height="26" viewBox="1038 1043 26 26" style="left:1038px;top:1043px"><path d="M1046,1049V1046.500C1046,1045.600 1046.600,1045 1047.500,1045H1054.500C1055.400,1045 1056,1045.600 1056,1046.500V1049" fill="none" stroke="#2aa0e8" stroke-width="1.600"/><path d="M1039.200,1048.500H1062.800V1064.500C1062.800,1066 1061.800,1067 1060.300,1067H1041.700C1040.200,1067 1039.200,1066 1039.200,1064.500Z" fill="#174f90"/><rect x="1045.700" y="1052.500" width="4.600" height="4.600" fill="#f25022"/><rect x="1051.300" y="1052.500" width="4.600" height="4.600" fill="#7fba00"/><rect x="1045.700" y="1058.100" width="4.600" height="4.600" fill="#00a4ef"/><rect x="1051.300" y="1058.100" width="4.600" height="4.600" fill="#ffb900"/></svg>
<svg width="28" height="34" viewBox="1082 1042 28 34" style="left:1082px;top:1042px"><rect x="1083" y="1044" width="24" height="24" rx="5" fill="#f01722"/><path d="M1086.500,1052L1089.800,1061.500L1092.800,1054.500L1095.800,1061.500L1098.300,1055.500" fill="none" stroke="#fff" stroke-width="2.200" stroke-linejoin="round" stroke-linecap="round"/><path d="M1097.500,1056L1104,1052.800L1100.300,1061.500Z" fill="#fff"/><circle cx="1104.500" cy="1048" r="4.300" fill="#5aa0f0" stroke="#e9eefa" stroke-width="0.800"/><path d="M1102.300,1046.500L1103.500,1049.800L1104.500,1047.500L1105.500,1049.800L1106.700,1046.500" fill="none" stroke="#fff" stroke-width="0.900"/><rect x="1092" y="1072.200" width="6" height="2.600" rx="1.300" fill="#8a8a8a"/></svg>
<svg width="26" height="26" viewBox="1126 1043 26 26" style="left:1126px;top:1043px"><circle cx="1138.700" cy="1056" r="12" fill="#5ea0f2"/><path d="M1138.700,1044A12,12 0 0 1 1149.100,1050H1138.700A6,6 0 0 0 1133.500,1053L1128.300,1050A12,12 0 0 1 1138.700,1044Z" fill="#2f6fe0"/><path d="M1150.700,1056A12,12 0 0 1 1138.700,1068L1143.900,1059A6,6 0 0 0 1143.900,1053H1149.500C1150.300,1054 1150.700,1055 1150.700,1056Z" fill="#8fc0f8"/><circle cx="1138.700" cy="1056" r="5.300" fill="#1c58d8" stroke="#dfeafc" stroke-width="1.300"/></svg>
<svg width="26" height="26" viewBox="1170 1043 26 26" style="left:1170px;top:1043px"><circle cx="1182" cy="1056" r="12" fill="#efe9e6"/><path d="M1189.500,1049.800A9,9 0 1 0 1189.500,1062.200" fill="none" stroke="#1c2a78" stroke-width="4.200"/><circle cx="1184.800" cy="1056" r="3" fill="#e8303a"/></svg>
<div class="a" style="left:1207.500px;top:1036.500px;width:38.500px;height:38.500px;border-radius:5px;background:rgba(255,255,255,.45);border:1px solid rgba(255,255,255,.5)"></div>
<svg width="26" height="26" viewBox="1214 1043 26 26" style="left:1214px;top:1043px"><circle cx="1226.700" cy="1055.500" r="12" fill="#2d4a9a"/><path d="M1220.500,1049L1226.700,1056.500L1232.900,1049M1226.700,1056.500V1064" fill="none" stroke="#fff" stroke-width="2.400" stroke-linecap="round" stroke-linejoin="round"/></svg>
<div class="a" style="left:1219px;top:1072.200px;width:16px;height:3px;border-radius:1.500px;background:#1a73e8"></div>
<svg width="16" height="16" viewBox="1680 1048 16 16" style="left:1680px;top:1048px"><path d="M1683,1059.200L1688,1054.200L1693,1059.200" fill="none" stroke="#1a1a1a" stroke-width="1.400"/></svg>
<div class="a" style="left:1712px;top:1048px;width:16px;height:16px;border-radius:3px;background:#fff"></div>
<svg width="16" height="16" viewBox="1712 1048 16 16" style="left:1712px;top:1048px"><path d="M1716.500,1060.200C1714.700,1060.200 1713.400,1059 1713.400,1057.400C1713.400,1056 1714.400,1054.900 1715.800,1054.700C1716.200,1052.700 1717.900,1051.300 1720,1051.300C1722.300,1051.300 1724.200,1053 1724.400,1055.200C1725.800,1055.400 1726.800,1056.500 1726.800,1057.800C1726.800,1059.200 1725.700,1060.200 1724.200,1060.200H1722.500" fill="none" stroke="#2f7df0" stroke-width="1.300" stroke-linecap="round"/><path d="M1718,1058.500L1720,1060.300L1722,1058.500M1720,1060V1055.800" fill="none" stroke="#2f7df0" stroke-width="1.200"/></svg>
<div class="t" style="left:1747.7px;top:1051px;font-size:12px;letter-spacing:-1.1px;color:#1a1a1a;">РУС</div>
<svg width="20" height="20" viewBox="1786 1046 20 20" style="left:1786px;top:1046px"><rect x="1788.600" y="1049" width="11" height="10.500" rx="1" fill="none" stroke="#1a1a1a" stroke-width="1.200"/><path d="M1794,1059.500V1062.500M1790.500,1063H1799.500M1800.500,1063H1802.500M1802.300,1063V1054" stroke="#1a1a1a" stroke-width="1.200" fill="none"/><rect x="1800.500" y="1048.200" width="3.500" height="5.800" rx="0.800" fill="#f3e6d4" stroke="#1a1a1a" stroke-width="1.100"/></svg>
<svg width="20" height="20" viewBox="1812 1046 20 20" style="left:1812px;top:1046px"><path d="M1815,1054.500H1817.500L1820.500,1051.500V1058" fill="none" stroke="#1a1a1a" stroke-width="1.200"/><path d="M1815,1054.500V1058.500H1817.500" fill="none" stroke="#1a1a1a" stroke-width="1.200"/><circle cx="1823.700" cy="1059.500" r="4.200" fill="#1a1a1a"/><path d="M1822,1057.800L1825.400,1061.200M1825.400,1057.800L1822,1061.200" stroke="#fff" stroke-width="1.100"/></svg>
<div class="t" style="left:1878.6px;top:1042px;font-size:12px;letter-spacing:-0.37px;color:#1a1a1a;">9:05</div>
<div class="t" style="left:1844.7px;top:1058px;font-size:12px;letter-spacing:-0.47px;color:#1a1a1a;">10.03.2026</div>

<div id="addrline" class="a"></div>
</body>
</html>
